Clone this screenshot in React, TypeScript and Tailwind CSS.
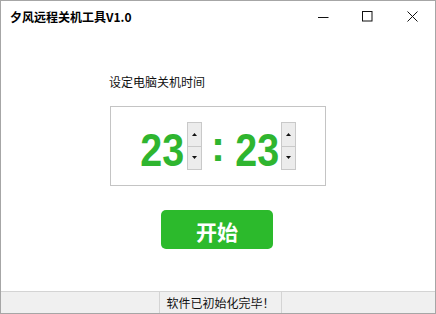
import React from 'react'

const CJK = '"Noto Sans CJK SC", "Microsoft YaHei", sans-serif'

function Spinner() {
  return (
    <div className="flex flex-col w-[15px] h-[48px]">
      <button className="flex-1 flex items-center justify-center bg-[#ececec] border border-[#c9c9c9]">
        <svg width="5" height="3" viewBox="0 0 5 3">
          <path d="M0 3 L2.5 0 L5 3 Z" fill="#111" />
        </svg>
      </button>
      <button className="flex-1 flex items-center justify-center bg-[#ececec] border border-[#c9c9c9] border-t-0">
        <svg width="5" height="3" viewBox="0 0 5 3">
          <path d="M0 0 L5 0 L2.5 3 Z" fill="#111" />
        </svg>
      </button>
    </div>
  )
}

function Digits({ value }: { value: string }) {
  return (
    <div className="w-[46px] flex justify-center pt-[6px]">
      <span
        className="inline-block scale-x-[0.84] text-[47px] leading-none font-bold text-[#2fb52f]"
        style={{ fontFamily: '"Liberation Sans", Arial, sans-serif' }}
      >
        {value}
      </span>
    </div>
  )
}

export default function App() {
  return (
    <div
      className="w-[436px] h-[314px] bg-white border border-[#a6a6a6] flex flex-col overflow-hidden"
      style={{ fontFamily: CJK }}
    >
      {/* Title bar */}
      <div className="h-[30px] flex items-center justify-between shrink-0">
        <span className="pl-[9px] pt-[2px] text-[12px] font-bold text-black">夕风远程关机工具V1.0</span>
        <div className="flex items-center h-full">
          <div className="w-[44px] h-full flex items-center justify-center pt-[2px]">
            <svg width="11" height="11" viewBox="0 0 11 11">
              <path d="M0 5.5 H10.5" stroke="#111" strokeWidth="1" />
            </svg>
          </div>
          <div className="w-[44px] h-full flex items-center justify-center">
            <svg width="11" height="11" viewBox="0 0 11 11">
              <rect x="0.5" y="0.5" width="9.5" height="9.5" fill="none" stroke="#111" strokeWidth="1" />
            </svg>
          </div>
          <div className="w-[46px] h-full flex items-center justify-center">
            <svg width="11" height="11" viewBox="0 0 11 11">
              <path d="M0.5 0.5 L10.5 10.5 M10.5 0.5 L0.5 10.5" stroke="#111" strokeWidth="1" />
            </svg>
          </div>
        </div>
      </div>

      {/* Content */}
      <div className="flex-1 flex flex-col">
        <div className="ml-[108px] mt-[43px] text-[12px] leading-[16px] text-[#111]">设定电脑关机时间</div>

        <div className="ml-[109px] mt-[16px] w-[216px] h-[80px] border border-[#c4c4c4] flex items-center pl-[28px]">
          <Digits value="23" />
          <div className="ml-[2px]">
            <Spinner />
          </div>
          <div className="w-[32px] flex justify-start pl-[9px] pt-[2px]">
            <span
              className="text-[42px] leading-none font-bold text-[#2fb52f]"
              style={{ fontFamily: '"Liberation Sans", Arial, sans-serif' }}
            >
              :
            </span>
          </div>
          <Digits value="23" />
          <div className="ml-[1px]">
            <Spinner />
          </div>
        </div>

        <button className="ml-[160px] mt-[24px] w-[112px] h-[39px] rounded-[5px] bg-[#2cba2c] flex items-center justify-center pt-[3px]">
          <span className="text-[21px] font-bold text-white leading-none">开始</span>
        </button>
      </div>

      {/* Status bar */}
      <div className="h-[22px] shrink-0 bg-[#f0f0f0] border-t border-[#d4d4d4] flex">
        <div className="w-[159px] border-r border-[#d4d4d4]" />
        <div className="w-[122px] border-r border-[#d4d4d4] flex items-center justify-center text-[12px] text-[#111]">
          软件已初始化完毕！
        </div>
        <div className="flex-1" />
      </div>
    </div>
  )
}
